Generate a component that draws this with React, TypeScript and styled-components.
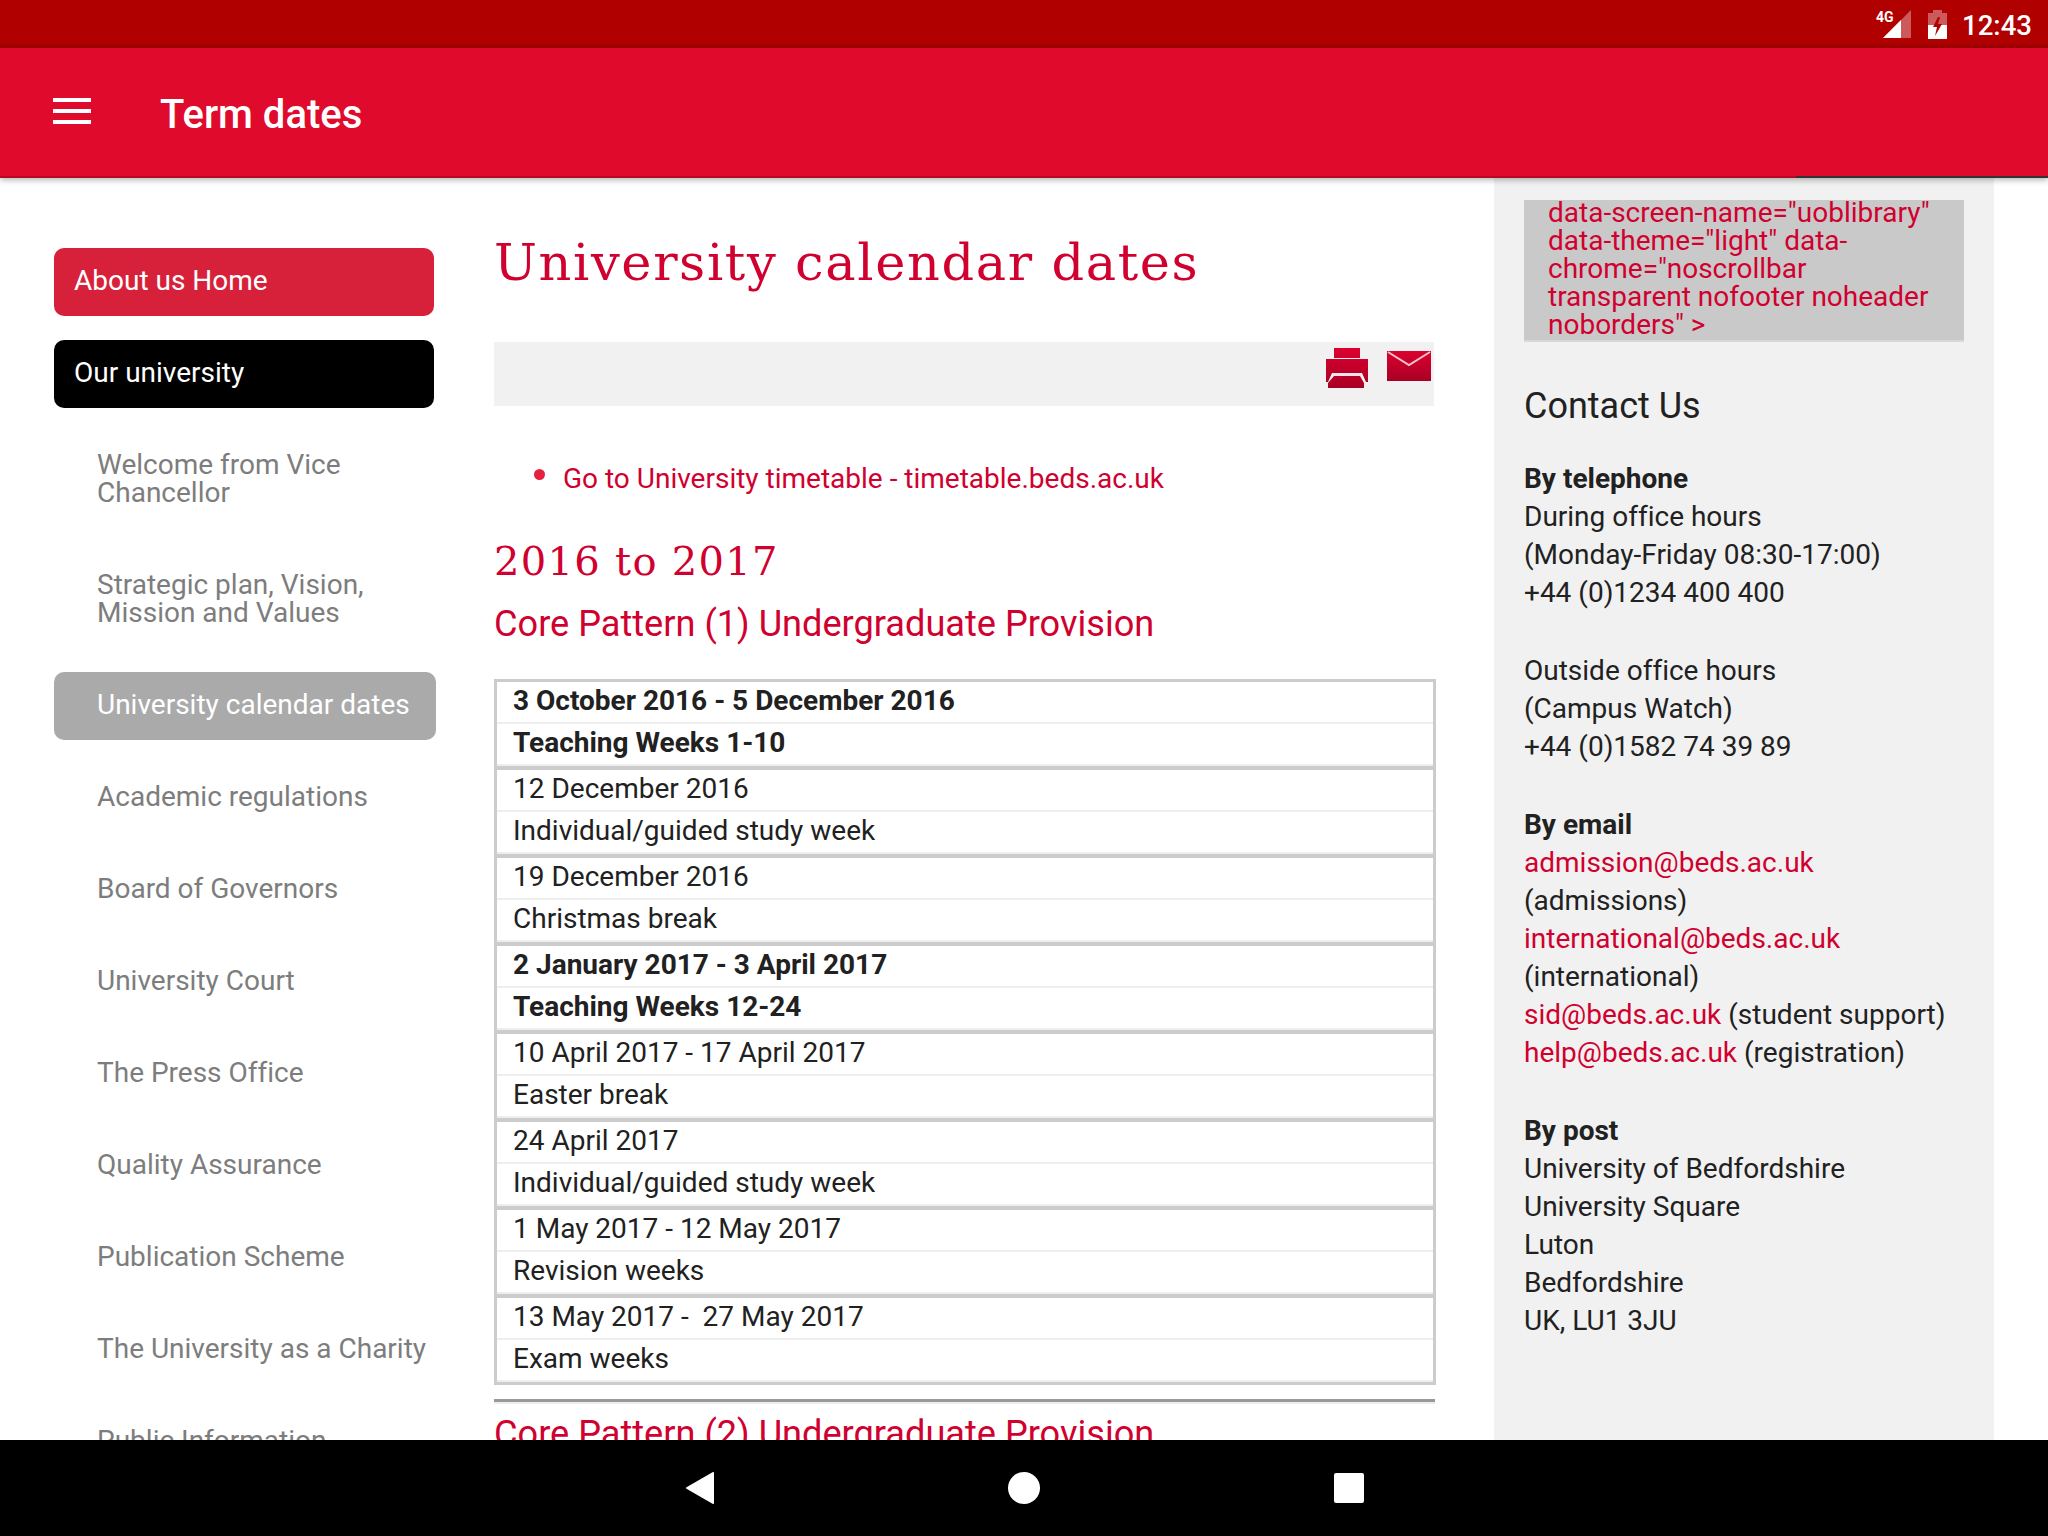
import React from 'react';
import styled, { createGlobalStyle } from 'styled-components';

const GlobalStyle = createGlobalStyle`
  html, body {
    margin: 0;
    padding: 0;
    background: #fff;
  }
  body {
    font-family: Roboto, "Liberation Sans", sans-serif;
    font-variant-ligatures: none;
    color: #212121;
  }
`;

const RED = '#d0002f';

const Screen = styled.div`
  width: 2048px;
  height: 1536px;
  display: flex;
  flex-direction: column;
  overflow: hidden;
  position: relative;
`;

const StatusBar = styled.div`
  height: 48px;
  flex: none;
  background: linear-gradient(#b00000 0 42px, #a00000 48px);
  color: #fff;
  display: flex;
  align-items: center;
  justify-content: flex-end;
  padding-right: 17px;
`;

const StatusTime = styled.span`
  width: 69px;
  font-size: 27.6px;
  font-weight: 500;
  margin-left: 15px;
  padding-top: 2px;
`;

const AppBar = styled.header`
  height: 130px;
  flex: none;
  background: #e00a2c;
  border-bottom: 2px solid #b80826;
  box-sizing: border-box;
  box-shadow: 0 2px 6px rgba(0, 0, 0, 0.3);
  display: flex;
  align-items: center;
  color: #fff;
  padding-left: 53px;
  position: relative;
  z-index: 2;
  &::after {
    content: '';
    position: absolute;
    right: 0;
    bottom: -2px;
    width: 252px;
    height: 2px;
    background: #333;
  }
`;

const Burger = styled.div`
  width: 38px;
  height: 26px;
  margin-right: 69px;
  margin-top: -2px;
  display: flex;
  flex-direction: column;
  justify-content: space-between;
  span {
    display: block;
    height: 4px;
    background: #fff;
  }
`;

const Title = styled.h1`
  margin: 0;
  padding-top: 4px;
  font-size: 40px;
  font-weight: 500;
`;

const Content = styled.div`
  flex: 1;
  min-height: 0;
  display: flex;
  padding-left: 54px;
  overflow: hidden;
`;

const Sidebar = styled.nav`
  width: 382px;
  flex: none;
  padding-top: 70px;
  display: flex;
  flex-direction: column;
  gap: 24px;
`;

const NavItem = styled.a<{ $tone?: 'home' | 'section' | 'active' }>`
  display: block;
  box-sizing: border-box;
  font-size: 28px;
  line-height: 28px;
  padding: 19px 0 21px ${(p) => (p.$tone === 'home' || p.$tone === 'section' ? '20px' : '43px')};
  width: ${(p) => (p.$tone === 'active' ? '382px' : '380px')};
  border-radius: 10px;
  flex: none;
  color: ${(p) => (p.$tone ? '#fff' : '#7d7d7d')};
  background: ${(p) =>
    p.$tone === 'home' ? '#d7213b' : p.$tone === 'section' ? '#000' : p.$tone === 'active' ? '#aaa' : 'transparent'};
`;

const Main = styled.main`
  width: 942px;
  flex: none;
  margin-left: 58px;
`;

const PageHeading = styled.h2`
  margin: 0;
  padding-top: 53px;
  font-family: "DejaVu Serif", serif;
  font-weight: 400;
  font-size: 51px;
  letter-spacing: 1.6px;
  line-height: 64px;
  color: ${RED};
`;

const Tools = styled.div`
  height: 64px;
  margin: 47px 2px 0 0;
  background: #f1f1f1;
  display: flex;
  justify-content: flex-end;
  padding: 6px 2px 0 0;
  box-sizing: border-box;
  gap: 19px;
`;

const BulletList = styled.ul`
  margin: 54px 0 0;
  padding: 0 0 0 69px;
  list-style: none;
`;

const BulletItem = styled.li`
  position: relative;
  font-size: 28px;
  line-height: 38px;
  color: ${RED};
  &::before {
    content: '';
    position: absolute;
    left: -29px;
    top: 9px;
    width: 11px;
    height: 11px;
    border-radius: 50%;
    background: #e8203f;
  }
`;

const YearHeading = styled.h3`
  margin: 38px 0 0;
  font-family: "DejaVu Serif", serif;
  font-weight: 400;
  font-size: 40px;
  letter-spacing: 1.3px;
  line-height: 50px;
  color: ${RED};
`;

const PatternHeading = styled.h4`
  margin: 15px 0 0;
  font-weight: 400;
  font-size: 36.15px;
  line-height: 46px;
  color: ${RED};
  hr + & {
    margin-top: 9px;
  }
`;

const DatesTable = styled.div`
  margin-top: 32px;
  border: 3px solid #ccc;
  box-sizing: border-box;
`;

const DatesGroup = styled.div`
  border-bottom: 4px solid #ccc;
  &:last-child {
    border-bottom: none;
  }
`;

const DatesRow = styled.div<{ $strong?: boolean }>`
  height: 42px;
  box-sizing: border-box;
  border-bottom: 2px solid #eee;
  padding-left: 16px;
  font-size: 28px;
  line-height: 38px;
  font-weight: ${(p) => (p.$strong ? 700 : 400)};
`;

const Rule = styled.hr`
  margin: 14px 1px 0 0;
  height: 3px;
  border: none;
  background: #999;
  box-shadow: 0 2px 0 #eee;
`;

const Aside = styled.aside`
  width: 500px;
  flex: none;
  margin-left: 58px;
  padding: 22px 30px 0;
  box-sizing: border-box;
  background: #f1f1f1;
`;

const EmbedBox = styled.div`
  height: 142px;
  box-sizing: border-box;
  background: #c9c9c9;
  border-bottom: 2px solid #d8d8d8;
  padding: 0 24px;
  font-size: 28px;
  line-height: 28px;
  color: ${RED};
  overflow: hidden;
`;

const EmbedText = styled.div`
  margin-top: -1px;
`;

const ContactTitle = styled.h3`
  margin: 42px 0 0;
  font-weight: 400;
  font-size: 36px;
  line-height: 44px;
`;

const ContactBlock = styled.p`
  margin: 32px 0 40px;
  font-size: 28px;
  line-height: 38px;
  & + & {
    margin-top: 0;
  }
`;

const Label = styled.strong`
  font-weight: 700;
  color: #212121;
`;

const MailLink = styled.a`
  color: ${RED};
`;

const NavBar = styled.div`
  height: 96px;
  flex: none;
  background: #000;
  position: relative;
  z-index: 3;
  display: flex;
  align-items: center;
  justify-content: center;
  gap: 294px;
  padding-left: 1px;
`;

const navItems = [
  'Welcome from Vice Chancellor',
  'Strategic plan, Vision, Mission and Values',
];

const navItemsAfter = [
  'Academic regulations',
  'Board of Governors',
  'University Court',
  'The Press Office',
  'Quality Assurance',
  'Publication Scheme',
  'The University as a Charity',
  'Public Information',
];

const dateGroups: { date: string; label: string; strong?: boolean }[] = [
  { date: '3 October 2016 - 5 December 2016', label: 'Teaching Weeks 1-10', strong: true },
  { date: '12 December 2016', label: 'Individual/guided study week' },
  { date: '19 December 2016', label: 'Christmas break' },
  { date: '2 January 2017 - 3 April 2017', label: 'Teaching Weeks 12-24', strong: true },
  { date: '10 April 2017 - 17 April 2017', label: 'Easter break' },
  { date: '24 April 2017', label: 'Individual/guided study week' },
  { date: '1 May 2017 - 12 May 2017', label: 'Revision weeks' },
  { date: '13 May 2017 -\u00a0 27 May 2017', label: 'Exam weeks' },
];

const PrinterIcon = () => (
  <svg width="42" height="40" viewBox="0 0 42 40">
    <defs>
      <linearGradient id="printerFill" x1="0" y1="0" x2="0" y2="1">
        <stop offset="0" stopColor="#dc0030" />
        <stop offset="1" stopColor="#a80024" />
      </linearGradient>
    </defs>
    <path
      fill="url(#printerFill)"
      d="M8 0h26v10H8zM0 11h42v23h-2l-4-9H6l-4 9H0zM8 28h26l4 7v5H2v-5z"
    />
    <path fill="#f4e4e7" d="M7 25h28v3H7z" />
  </svg>
);

const MailIcon = () => (
  <svg width="44" height="30" viewBox="0 0 44 30" style={{ marginTop: 3, marginRight: 1 }}>
    <defs>
      <linearGradient id="mailFill" x1="0" y1="0" x2="0" y2="1">
        <stop offset="0" stopColor="#dc0030" />
        <stop offset="1" stopColor="#a80024" />
      </linearGradient>
    </defs>
    <path fill="url(#mailFill)" d="M0 0h44v30H0z" />
    <path fill="none" stroke="#f0c4cc" strokeWidth="2" d="M1 1l21 13L43 1" />
  </svg>
);

const SignalIcon = () => (
  <svg width="36" height="30" viewBox="0 0 36 30">
    <path fill="#cc5a5a" d="M36 1v28H8z" />
    <path fill="#fff" d="M26 11v18H8z" />
    <text x="1" y="13" fill="#fff" fontSize="14" fontWeight="700" fontFamily="Roboto, sans-serif">
      4G
    </text>
  </svg>
);

const BatteryIcon = () => (
  <svg width="19" height="29" viewBox="0 0 19 29" style={{ marginLeft: 17 }}>
    <path fill="#cc5a5a" d="M5 0h9v3h5v26H0V3h5z" />
    <path fill="#fff" d="M0 15h19v14H0z" />
    <path fill="#b00000" d="M10 7l-5 10h4l-2 9 7-12h-4l2-7z" />
  </svg>
);

const BackIcon = () => (
  <svg width="28" height="32" viewBox="0 0 28 32">
    <path fill="#fff" stroke="#fff" strokeLinejoin="round" strokeWidth="2" d="M27 1v30L1 16z" />
  </svg>
);

const HomeIcon = () => (
  <svg width="32" height="32" viewBox="0 0 32 32">
    <circle cx="16" cy="16" r="16" fill="#fff" />
  </svg>
);

const RecentIcon = () => (
  <svg width="30" height="30" viewBox="0 0 30 30">
    <rect width="30" height="30" rx="2" fill="#fff" />
  </svg>
);

const App: React.FC = () => {
  return (
    <>
      <GlobalStyle />
      <Screen>
        <StatusBar>
          <SignalIcon />
          <BatteryIcon />
          <StatusTime>12:43</StatusTime>
        </StatusBar>
        <AppBar>
          <Burger>
            <span />
            <span />
            <span />
          </Burger>
          <Title>Term dates</Title>
        </AppBar>
        <Content>
          <Sidebar>
            <NavItem $tone="home">About us Home</NavItem>
            <NavItem $tone="section">Our university</NavItem>
            {navItems.map((item) => (
              <NavItem key={item}>{item}</NavItem>
            ))}
            <NavItem $tone="active">University calendar dates</NavItem>
            {navItemsAfter.map((item) => (
              <NavItem key={item}>{item}</NavItem>
            ))}
          </Sidebar>
          <Main>
            <PageHeading>University calendar dates</PageHeading>
            <Tools>
              <PrinterIcon />
              <MailIcon />
            </Tools>
            <BulletList>
              <BulletItem>Go to University timetable - timetable.beds.ac.uk</BulletItem>
            </BulletList>
            <YearHeading>2016 to 2017</YearHeading>
            <PatternHeading>Core Pattern (1) Undergraduate Provision</PatternHeading>
            <DatesTable>
              {dateGroups.map((group) => (
                <DatesGroup key={group.date}>
                  <DatesRow $strong={group.strong}>{group.date}</DatesRow>
                  <DatesRow $strong={group.strong}>{group.label}</DatesRow>
                </DatesGroup>
              ))}
            </DatesTable>
            <Rule />
            <PatternHeading>Core Pattern (2) Undergraduate Provision</PatternHeading>
          </Main>
          <Aside>
            <EmbedBox>
              <EmbedText>
                data-screen-name="uoblibrary" data-theme="light" data-chrome="noscrollbar transparent nofooter noheader
                noborders" &gt;
              </EmbedText>
            </EmbedBox>
            <ContactTitle>Contact Us</ContactTitle>
            <ContactBlock>
              <Label>By telephone</Label>
              <br />
              During office hours
              <br />
              (Monday-Friday 08:30-17:00)
              <br />
              +44 (0)1234 400 400
            </ContactBlock>
            <ContactBlock>
              Outside office hours
              <br />
              (Campus Watch)
              <br />
              +44 (0)1582 74 39 89
            </ContactBlock>
            <ContactBlock>
              <Label>By email</Label>
              <br />
              <MailLink>admission@beds.ac.uk</MailLink>
              <br />
              (admissions)
              <br />
              <MailLink>international@beds.ac.uk</MailLink>
              <br />
              (international)
              <br />
              <MailLink>sid@beds.ac.uk</MailLink> (student support)
              <br />
              <MailLink>help@beds.ac.uk</MailLink> (registration)
            </ContactBlock>
            <ContactBlock>
              <Label>By post</Label>
              <br />
              University of Bedfordshire
              <br />
              University Square
              <br />
              Luton
              <br />
              Bedfordshire
              <br />
              UK, LU1 3JU
            </ContactBlock>
          </Aside>
        </Content>
        <NavBar>
          <BackIcon />
          <HomeIcon />
          <RecentIcon />
        </NavBar>
      </Screen>
    </>
  );
};

export default App;
